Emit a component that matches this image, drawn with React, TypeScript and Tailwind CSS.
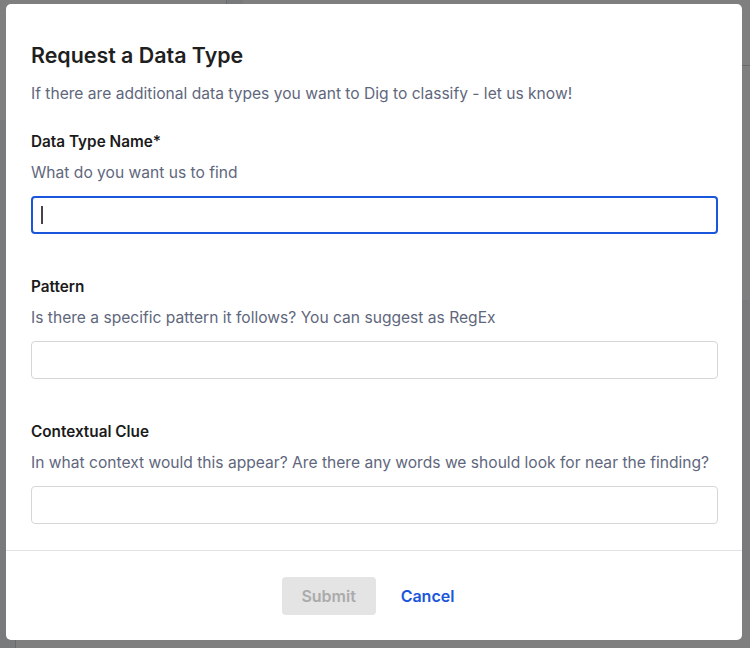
import React from 'react';

const font = { fontFamily: 'Inter, "Noto Sans", sans-serif' };

function BackgroundPage() {
  // what sits behind the modal: dashboard cards and a table
  return (
    <div className="h-[648px] w-[750px] overflow-hidden bg-[#f3f4f6]">
      <div className="flex gap-[16px]">
        <div className="h-[120px] w-[421px] border-r border-[#d1d5db] bg-white" />
        <div className="h-[300px] flex-1 bg-white pl-[307px] pt-[14px]">
          <div className="text-[18px] text-[#374151]">5</div>
          <div className="mt-[24px] h-px w-[200px] bg-[#d1d5db]" />
          <div className="mt-[96px] h-[80px] w-[80px] rounded-full bg-[conic-gradient(#1e3a8a_0deg_200deg,#2b7a9b_200deg_360deg)]" />
        </div>
      </div>
      <div className="mt-[300px] ml-[15px] h-[300px] border-l border-[#d1d5db] bg-white">
        <div className="flex pt-[328px] text-[16px] font-semibold text-[#1f2937]">
          <span className="w-[375px] pl-[32px]">Data Type</span>
          <span className="w-[315px]">Data Type Group</span>
          <span>Findings</span>
        </div>
      </div>
    </div>
  );
}

function Field({
  label,
  hint,
  focused,
}: {
  label: string;
  hint: string;
  focused?: boolean;
}) {
  return (
    <div className="flex flex-col">
      <label className="text-[15.3px] font-semibold leading-[20px] text-[#1b1b1b]">{label}</label>
      <p className="mt-[11px] text-[15.6px] leading-[20px] text-[#5f677d]">{hint}</p>
      {focused ? (
        <div className="mt-[13px] flex h-[38px] items-center rounded-[4px] border-2 border-[#1a56db] px-[8px]">
          <span className="h-[18px] w-[2px] bg-[#444]" />
          <input className="h-full flex-1 bg-transparent text-[16px] outline-none" />
        </div>
      ) : (
        <input className="mt-[13px] h-[38px] rounded-[4px] border border-[#d6d6d9] px-[10px] text-[16px] outline-none" />
      )}
    </div>
  );
}

export default function App() {
  return (
    <div className="relative h-[648px] w-[750px] overflow-hidden" style={font}>
      <BackgroundPage />
      <div className="absolute inset-0 bg-black/50 pt-[4px] pl-[6px]">
        <div className="flex h-[636px] w-[736px] flex-col rounded-[5px] bg-white">
          <div className="flex flex-col pl-[25px] pr-[24px] pt-[37px]">
            <h2 className="text-[21.4px] font-semibold leading-[28px] text-[#1f1f1f]">Request a Data Type</h2>
            <p className="mt-[13px] text-[15.6px] leading-[24px] text-[#5f677d]">
              If there are additional data types you want to Dig to classify - let us know!
            </p>
            <div className="mt-[26px] flex flex-col gap-[43px]">
              <Field label="Data Type Name*" hint="What do you want us to find" focused />
              <Field label="Pattern" hint="Is there a specific pattern it follows? You can suggest as RegEx" />
              <Field
                label="Contextual Clue"
                hint="In what context would this appear? Are there any words we should look for near the finding?"
              />
            </div>
          </div>
          <div className="mt-[26px] h-px bg-[#e2e2e2]" />
          <div className="flex flex-1 items-center justify-center pr-[12px]">
            <button
              disabled
              className="h-[38px] w-[94px] rounded-[4px] bg-[#e4e4e4] text-[16px] font-semibold text-[#ababab]"
            >
              Submit
            </button>
            <button className="ml-[25px] text-[16px] font-semibold text-[#1a56db]">Cancel</button>
          </div>
        </div>
      </div>
    </div>
  );
}
